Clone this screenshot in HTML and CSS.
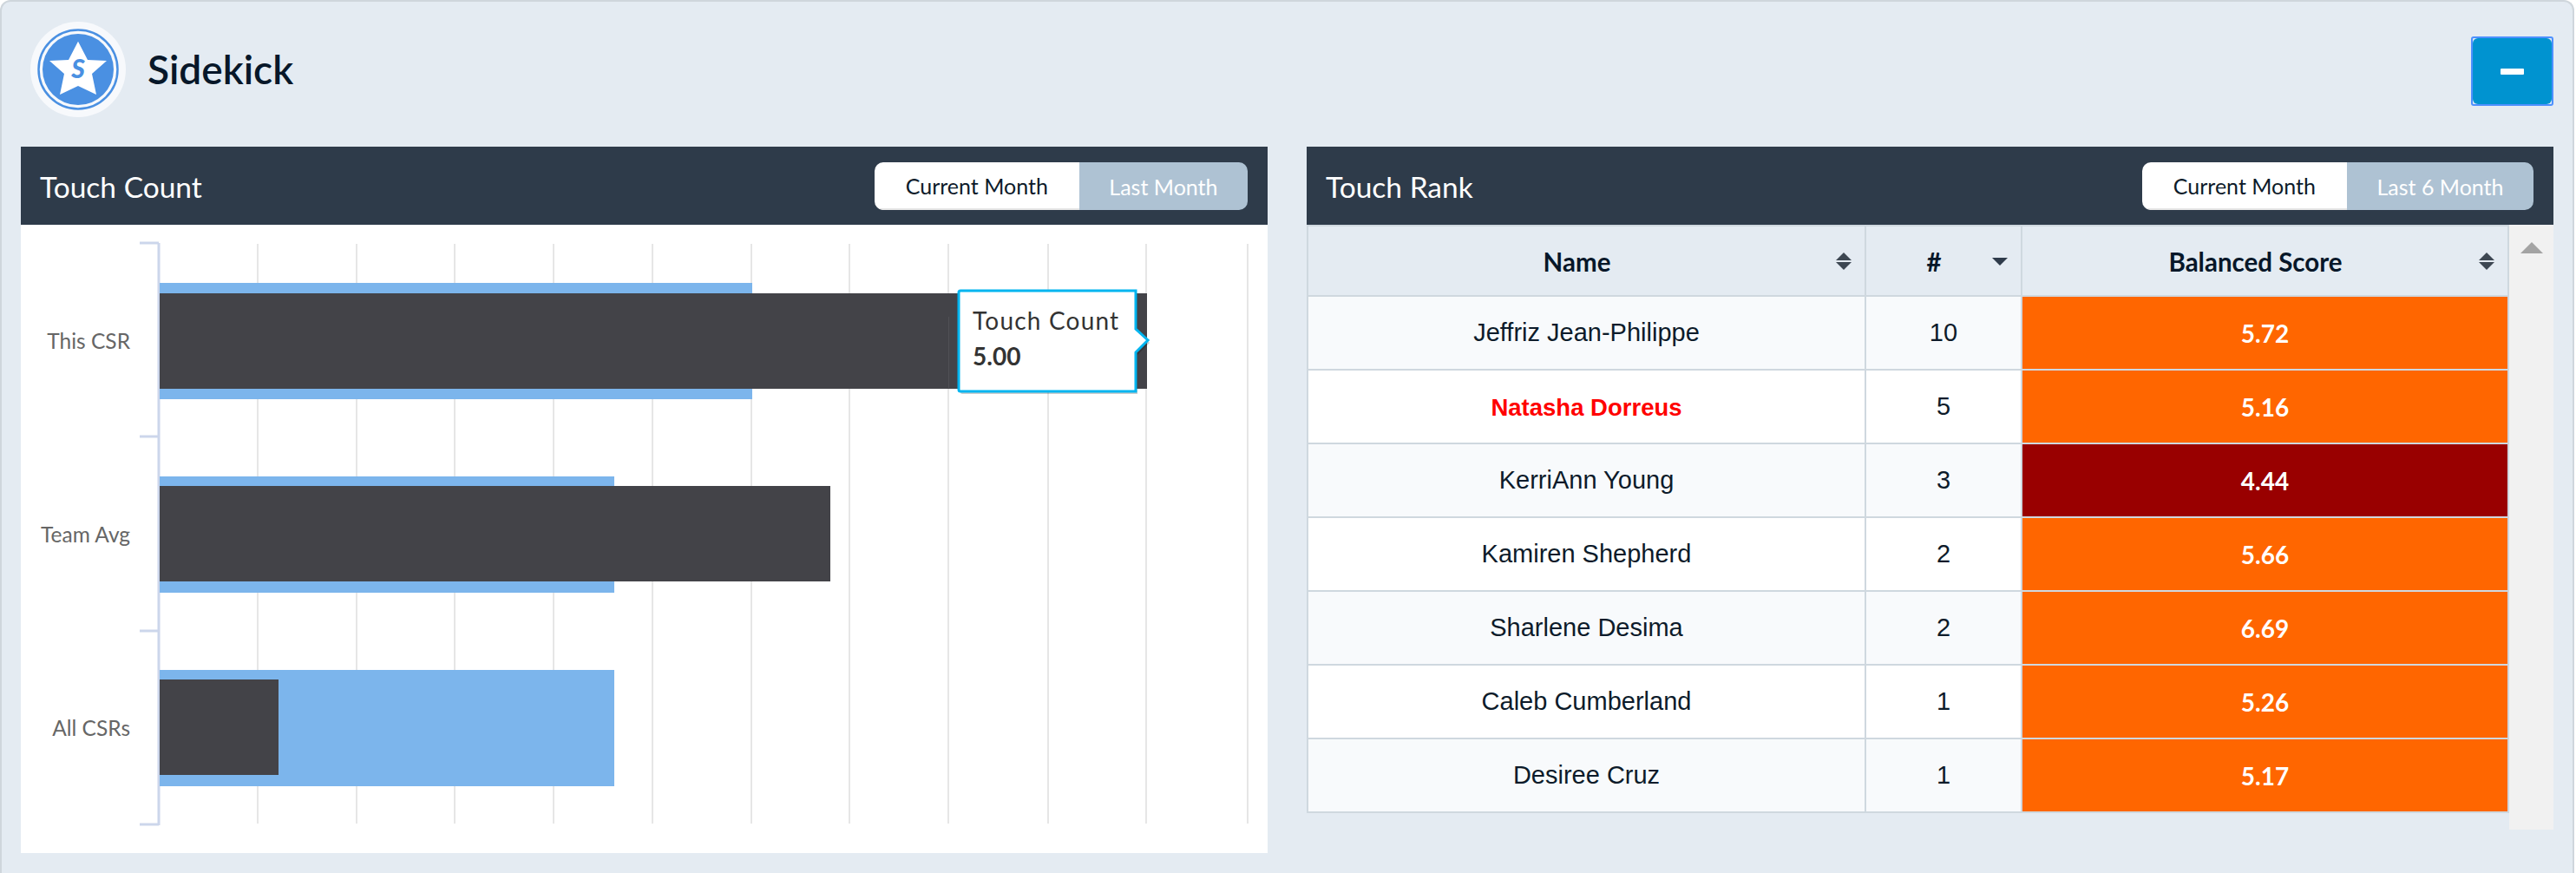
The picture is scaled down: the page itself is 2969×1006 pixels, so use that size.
FILE: index.html
```html
<!DOCTYPE html>
<html lang="en">
<head>
    <meta charset="UTF-8">
    <meta name="viewport" content="width=device-width, initial-scale=1.0">
    <title>Sidekick</title>
    <link rel="stylesheet" href="styles.css">
</head>
<body>
    <div class="container">
        <div class="top-bar">
            <div class="brand">
                <svg class="logo" width="110" height="110" viewBox="0 0 110 110">
                    <circle cx="55" cy="55" r="55" fill="#f7f9fc"/>
                    <circle cx="55" cy="55" r="45.5" fill="none" stroke="#4a90e2" stroke-width="2.5"/>
                    <circle cx="55" cy="55" r="41" fill="#4a90e2"/>
                    <polygon points="55,22.7 66,44 88,45 71,60 76,84 55,74 34,84 39,60 22,45 44,44" fill="#fff"/>
                    <text x="55" y="65" text-anchor="middle" class="logo-letter">S</text>
                </svg>
                <h1>Sidekick</h1>
            </div>
            <button class="collapse-btn" type="button"><span class="btn-face"><span class="minus"></span></span></button>
        </div>

        <div class="panels">
            <section class="panel">
                <div class="panel-head">
                    <h2>Touch Count</h2>
                    <div class="toggle">
                        <button class="active" type="button">Current Month</button>
                        <button type="button">Last Month</button>
                    </div>
                </div>
                <div class="chart-body">
                    <svg class="chart" width="1437" height="724" viewBox="24 259 1437 724">
                        <g class="grid">
                            <line x1="297" y1="281" x2="297" y2="949"/>
                            <line x1="411" y1="281" x2="411" y2="949"/>
                            <line x1="524" y1="281" x2="524" y2="949"/>
                            <line x1="638" y1="281" x2="638" y2="949"/>
                            <line x1="752" y1="281" x2="752" y2="949"/>
                            <line x1="866" y1="281" x2="866" y2="949"/>
                            <line x1="979" y1="281" x2="979" y2="949"/>
                            <line x1="1093" y1="281" x2="1093" y2="949"/>
                            <line x1="1208" y1="281" x2="1208" y2="949"/>
                            <line x1="1321" y1="281" x2="1321" y2="949"/>
                            <line x1="1438" y1="281" x2="1438" y2="949"/>
                        </g>
                        <g class="axis">
                            <line x1="183" y1="280" x2="183" y2="951"/>
                            <line x1="161" y1="280" x2="183" y2="280"/>
                            <line x1="161" y1="503" x2="183" y2="503"/>
                            <line x1="161" y1="727" x2="183" y2="727"/>
                            <line x1="161" y1="950" x2="183" y2="950"/>
                        </g>
                        <rect class="bar-blue" x="184" y="326" width="683" height="134"/>
                        <rect class="bar-blue" x="184" y="549" width="524" height="134"/>
                        <rect class="bar-blue" x="184" y="772" width="524" height="134"/>
                        <rect class="bar-dark" x="184" y="338" width="1138" height="110"/>
                        <rect class="bar-dark" x="184" y="560" width="773" height="110"/>
                        <rect class="bar-dark" x="184" y="783" width="137" height="110"/>
                        <line class="bar-seam" x1="1093.5" y1="365" x2="1093.5" y2="447"/>
                        <text class="cat" x="150" y="402">This CSR</text>
                        <text class="cat" x="150" y="625">Team Avg</text>
                        <text class="cat" x="150" y="848">All CSRs</text>
                        <g class="tooltip">
                            <path class="tip-shadow" d="M1107 335H1309V379L1323 392L1309 406V451H1107Q1105 451 1105 449V337Q1105 335 1107 335Z"/>
                            <path class="tip-box" d="M1107 335H1309V379L1323 392L1309 406V451H1107Q1105 451 1105 449V337Q1105 335 1107 335Z"/>
                            <text class="tip-title" x="1121" y="380">Touch Count</text>
                            <text class="tip-value" x="1121" y="421">5.00</text>
                        </g>
                    </svg>
                </div>
            </section>

            <section class="panel">
                <div class="panel-head">
                    <h2>Touch Rank</h2>
                    <div class="toggle">
                        <button class="active" type="button">Current Month</button>
                        <button type="button">Last 6 Month</button>
                    </div>
                </div>
                <div class="table-wrap">
                    <table class="rank-table">
                        <colgroup>
                            <col class="col-name">
                            <col class="col-num">
                            <col class="col-score">
                        </colgroup>
                        <thead>
                            <tr>
                                <th>Name<span class="sort both"></span></th>
                                <th>#<span class="sort desc"></span></th>
                                <th>Balanced Score<span class="sort both"></span></th>
                            </tr>
                        </thead>
                        <tbody>
                            <tr><td>Jeffriz Jean-Philippe</td><td>10</td><td class="score orange">5.72</td></tr>
                            <tr><td class="me">Natasha Dorreus</td><td>5</td><td class="score orange">5.16</td></tr>
                            <tr><td>KerriAnn Young</td><td>3</td><td class="score red">4.44</td></tr>
                            <tr><td>Kamiren Shepherd</td><td>2</td><td class="score orange">5.66</td></tr>
                            <tr><td>Sharlene Desima</td><td>2</td><td class="score orange">6.69</td></tr>
                            <tr><td>Caleb Cumberland</td><td>1</td><td class="score orange">5.26</td></tr>
                            <tr><td>Desiree Cruz</td><td>1</td><td class="score orange">5.17</td></tr>
                        </tbody>
                    </table>
                    <div class="scrollbar"><span class="scroll-up"></span></div>
                </div>
            </section>
        </div>
    </div>
</body>
</html>
```

FILE: styles.css
```css
html, body {
    height: 100%;
}

body {
    margin: 0;
    background-color: #fff;
    font-family: Lato, "Liberation Sans", sans-serif;
    overflow: hidden;
}

.container {
    box-sizing: border-box;
    width: 2967px;
    height: 1006px;
    padding: 0 22px;
    background-color: #e4ebf2;
    border: 2px solid #cfd6dc;
    border-bottom: none;
    border-radius: 12px 12px 0 0;
}

.top-bar {
    display: flex;
    justify-content: space-between;
    align-items: flex-start;
    box-sizing: border-box;
    height: 167px;
    padding-top: 23px;
}

.brand {
    display: flex;
    align-items: center;
    gap: 25px;
    padding-left: 11px;
}

.logo {
    display: block;
}

.logo-letter {
    font-family: Lato, sans-serif;
    font-size: 30px;
    font-weight: 900;
    font-style: italic;
    fill: #4a90e2;
}

h1 {
    margin: -1px 0 0;
    font-size: 46px;
    font-weight: 600;
    color: #071729;
}

.collapse-btn {
    box-sizing: border-box;
    width: 95px;
    height: 80px;
    margin-top: 17px;
    padding: 0;
    background-color: #dbe7f7;
    border: 2px solid #4d90fe;
    border-radius: 3px;
}

.btn-face {
    display: flex;
    justify-content: center;
    align-items: center;
    height: 100%;
    background-color: #0093d0;
    border-radius: 6px;
}

.minus {
    width: 27px;
    height: 7px;
    background-color: #fff;
    border-radius: 1px;
}

.panels {
    display: grid;
    grid-template-columns: 1437px 1437px;
    gap: 45px;
}

.panel-head {
    display: flex;
    justify-content: space-between;
    align-items: center;
    height: 90px;
    padding: 0 23px 0 22px;
    background-color: #2e3b4a;
}

h2 {
    margin: 0;
    padding-top: 2px;
    font-size: 33.5px;
    font-weight: 400;
    color: #fff;
}

.toggle {
    display: flex;
    height: 55px;
    border-radius: 10px;
    overflow: hidden;
}

.toggle button {
    padding: 2px 34.5px 0;
    background-color: #aec2d3;
    border: none;
    font-family: Lato, sans-serif;
    font-size: 25px;
    color: #fff;
}

.toggle button.active {
    padding: 2px 36px 0;
    background-color: #fff;
    border-bottom: 2px solid #e6e6e6;
    color: #0d1b2a;
}

.chart-body {
    height: 724px;
    background-color: #fff;
}

.chart {
    display: block;
}

.grid line {
    stroke: #e6e6e6;
    stroke-width: 2;
}

.axis line {
    stroke: #ccd6eb;
    stroke-width: 3;
}

.bar-blue {
    fill: #7cb5ec;
}

.bar-dark {
    fill: #434348;
}

.bar-seam {
    stroke: #505055;
    stroke-width: 1;
}

.cat {
    font-family: Lato, sans-serif;
    font-size: 24.5px;
    fill: #666;
    text-anchor: end;
}

.tip-box {
    fill: #fff;
    stroke: #00b5f0;
    stroke-width: 3;
}

.tip-shadow {
    fill: #000;
    opacity: 0.2;
    transform: translate(2px, 3px);
}

.tip-title {
    font-family: Lato, sans-serif;
    font-size: 28px;
    letter-spacing: 1.2px;
    fill: #333;
}

.tip-value {
    font-family: Lato, sans-serif;
    font-size: 28px;
    font-weight: 700;
    fill: #333;
}

.table-wrap {
    display: flex;
    align-items: flex-start;
}

.rank-table {
    width: 1386px;
    table-layout: fixed;
    border-collapse: collapse;
    font-family: "Liberation Sans", Arial, sans-serif;
    font-size: 29px;
    color: #0d1b2a;
}

.col-name {
    width: 643px;
}

.col-num {
    width: 180px;
}

.rank-table th {
    position: relative;
    height: 77px;
    padding: 2px 22px 0 0;
    border: 2px solid #cfd8df;
    font-family: Lato, sans-serif;
    font-size: 29.5px;
    font-weight: 700;
    color: #071729;
}

.rank-table td {
    height: 83px;
    padding: 0;
    border: 2px solid #cfd8df;
    text-align: center;
    background-color: #fff;
}

.rank-table tbody tr:nth-child(odd) td {
    background-color: #f8fafc;
}

.rank-table td.me {
    height: 81px;
    padding-top: 2px;
    font-size: 27.5px;
    font-weight: 700;
    color: #f00;
}

.rank-table td.score {
    font-family: Lato, sans-serif;
    font-size: 28px;
    font-weight: 700;
    color: #fff;
}

.rank-table td.orange,
.rank-table tbody tr:nth-child(odd) td.orange {
    background-color: #f60;
}

.rank-table td.red,
.rank-table tbody tr:nth-child(odd) td.red {
    background-color: #900;
}

/* sort carets sit on top of the header cell */
.sort {
    position: absolute;
    top: 30px;
    right: 15px;
    width: 18px;
    height: 20px;
}

.sort::before,
.sort::after {
    content: "";
    position: absolute;
    left: 0;
    border-left: 9px solid transparent;
    border-right: 9px solid transparent;
}

.sort.both::before {
    top: 0;
    border-bottom: 9px solid #3d4752;
}

.sort.both::after {
    bottom: 0;
    border-top: 9px solid #3d4752;
}

.sort.desc::after {
    top: 6px;
    border-top: 9px solid #2e3b4a;
}

.scrollbar {
    flex: none;
    width: 51px;
    height: 697px;
    background-color: #f1f1f1;
}

.scroll-up {
    display: block;
    width: 0;
    margin: 20px auto 0;
    border-left: 13px solid transparent;
    border-right: 13px solid transparent;
    border-bottom: 13px solid #a3a3a3;
}
```
